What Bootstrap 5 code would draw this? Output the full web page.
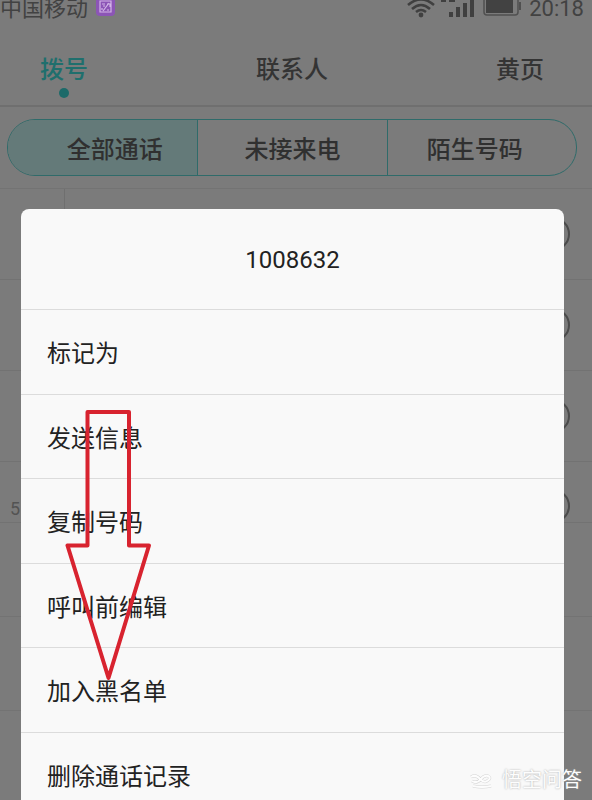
<!DOCTYPE html>
<html lang="zh-CN">
<head>
<meta charset="utf-8">
<meta name="viewport" content="width=device-width, initial-scale=1">
<title>通话记录</title>
<link href="https://cdn.jsdelivr.net/npm/bootstrap@5.3.0/dist/css/bootstrap.min.css" rel="stylesheet">
<style>
body { font-family: Roboto, "Noto Sans CJK SC", sans-serif; font-size: 24px; line-height: 32px; color: #343434; background: #7b7b7b; }
.phone { background: #7b7b7b; }
.status { height: 18px; font-size: 22px; line-height: 18px; color: #424242; padding: 0 8px 0 0; }
.tabs { height: 89px; padding: 0 48px 0 40px; border-bottom: 2px solid #6f6f6f; }
.tabs button { padding: 36px 0 0; color: #343434; font-size: 24px; line-height: 32px; font-weight: 500; }
.tabs button.current { color: #1f6f6d; }
.tabs .dot { width: 10px; height: 10px; background: #1c6a69; margin-top: 2px; }
.filters { padding: 12px 15px 12px 7px; border-bottom: 1px solid #737373; }
.segments { display: grid; grid-template-columns: repeat(3, 1fr); height: 57px; border: 1px solid #2f6b6a; border-radius: 28px; }
.segments button { color: #303030; font-weight: 500; padding: 5px 0 0; }
.segments button + button { border-left: 1px solid #2f6b6a !important; }
.segments button.current { background: #647a79; padding-left: 24px; }
.segments button:last-child { padding-right: 14px; }
.call { height: 91px; border-bottom: 1px solid #727272; padding-right: 21px; }
.call svg { display: block; }
.call.first .avatar-line { width: 65px; height: 91px; border-right: 1px solid #6f6f6f; }
.call.cut { height: 61px; }
.call.cut .num { font-size: 18px; line-height: 20px; padding: 37px 0 0 10px; color: #535353; }
.key { height: 94px; border-bottom: 1px solid #737373; }
.sheet { top: 209px; left: 21px; right: 28px; background: #f9f9f9; border-radius: 8px; color: #222; }
.sheet h1 { height: 100px; font-size: 24px; font-weight: 400; padding-top: 2px; }
.options { display: grid; grid-auto-rows: 1fr; height: 507px; }
.options button { border-top: 1px solid #dcdcdc; padding: 5px 0 0 26px; color: #222; font-weight: 400; }
.pointer { left: 64px; top: 407px; pointer-events: none; }
.brand { right: 10px; bottom: 8px; font-size: 20px; line-height: 24px; color: #fdfdfd; text-shadow: 0 0 2px #a0a0a0; }
</style>
<script src="https://cdn.jsdelivr.net/npm/bootstrap@5.3.0/dist/js/bootstrap.bundle.min.js"></script>
</head>
<body>
<div class="phone position-relative vh-100 overflow-hidden">
  <header>
    <div class="status d-flex justify-content-between align-items-start">
      <div class="d-flex align-items-start gap-2">
        <span class="carrier">中国移动</span>
        <svg width="20" height="18" viewBox="0 0 20 18" aria-hidden="true"><rect x="0" y="-4" width="19" height="20" rx="4" fill="#8c55b6"/><g fill="none" stroke="#d3b5e8" stroke-width="1.2"><path d="M4 1h11v11H4zM6 4h3M7 6h2M7 11l6-8M11 4h3v3M6 10V8M11 10h2"/></g></svg>
      </div>
      <div class="d-flex align-items-start">
        <svg width="118" height="18" viewBox="0 0 118 18" aria-label="信号与电量" role="img">
          <g fill="none" stroke="#404040" stroke-width="2.6"><path d="M5 5Q18-6 31 5M9 9Q18 1 27 9M13 12Q18 8 23 12"/></g>
          <circle cx="18" cy="15" r="2.4" fill="#404040"/>
          <g fill="#404040"><path d="M46 12h4v5h-4zM53 7h4v10h-4zM60 3h4v14h-4zM67-1h4v18h-4z"/><path d="M38 0h5v2h-5zM46 0h6v2h-6z"/></g>
          <path d="M81-3h31q3 0 3 3v12q0 3-3 3H84q-3 0-3-3z" fill="none" stroke="#505050" stroke-width="1.5"/>
          <path d="M83-1h27v14H83z" fill="#424242"/><path d="M117 2v8" stroke="#505050" stroke-width="2"/>
        </svg>
        <span class="clock ps-2">20:18</span>
      </div>
    </div>
    <nav class="tabs d-flex justify-content-between align-items-start">
      <button type="button" class="current btn border-0 rounded-0 d-flex flex-column align-items-center">拨号<span class="dot rounded-circle"></span></button>
      <button type="button" class="btn border-0 rounded-0">联系人</button>
      <button type="button" class="btn border-0 rounded-0">黄页</button>
    </nav>
    <div class="filters">
      <div class="segments overflow-hidden">
        <button type="button" class="current border-0">全部通话</button>
        <button type="button" class="bg-transparent border-0">未接来电</button>
        <button type="button" class="bg-transparent border-0">陌生号码</button>
      </div>
    </div>
  </header>
  <main>
    <div class="call first d-flex justify-content-between align-items-center"><span class="avatar-line"></span><svg width="36" height="36"><circle cx="18" cy="18" r="16" fill="none" stroke="#4b4b4b" stroke-width="2"/></svg></div>
    <div class="call d-flex justify-content-end align-items-center"><svg width="36" height="36"><circle cx="18" cy="18" r="16" fill="none" stroke="#4b4b4b" stroke-width="2"/></svg></div>
    <div class="call d-flex justify-content-end align-items-center"><svg width="36" height="36"><circle cx="18" cy="18" r="16" fill="none" stroke="#4b4b4b" stroke-width="2"/></svg></div>
    <div class="call cut d-flex justify-content-between align-items-end"><span class="num align-self-start">5</span><svg width="36" height="34"><circle cx="18" cy="18" r="16" fill="none" stroke="#4b4b4b" stroke-width="2"/></svg></div>
    <div class="key"></div>
    <div class="key"></div>
    <div class="key"></div>
  </main>

  <section class="sheet position-absolute" role="dialog" aria-labelledby="number">
    <h1 id="number" class="m-0 d-flex align-items-center justify-content-center">1008632</h1>
    <div class="options">
      <button type="button" class="bg-transparent border-start-0 border-end-0 border-bottom-0 text-start">标记为</button>
      <button type="button" class="bg-transparent border-start-0 border-end-0 border-bottom-0 text-start">发送信息</button>
      <button type="button" class="bg-transparent border-start-0 border-end-0 border-bottom-0 text-start">复制号码</button>
      <button type="button" class="bg-transparent border-start-0 border-end-0 border-bottom-0 text-start">呼叫前编辑</button>
      <button type="button" class="bg-transparent border-start-0 border-end-0 border-bottom-0 text-start">加入黑名单</button>
      <button type="button" class="bg-transparent border-start-0 border-end-0 border-bottom-0 text-start">删除通话记录</button>
    </div>
  </section>

  <svg class="pointer position-absolute" width="90" height="280" viewBox="0 0 90 280" aria-hidden="true"><path d="M23.500 5H65V138.500H85L44.500 271L3.500 138.500H23.500Z" fill="none" stroke="#d8232f" stroke-width="4" stroke-linejoin="round"/></svg>
  <div class="brand position-absolute d-flex align-items-center gap-2">
    <svg width="24" height="18" viewBox="0 0 24 18" fill="none" aria-hidden="true"><g stroke="#d4d4d4" stroke-width="3"><path d="M1 6q5-3 9 2 4 4 7 2 5-3 1-5-4-1-7 3-4 5-9 2M3 15q9 2 18 0"/></g><g stroke="#fdfdfd" stroke-width="2"><path d="M1 6q5-3 9 2 4 4 7 2 5-3 1-5-4-1-7 3-4 5-9 2M3 15q9 2 18 0"/></g></svg>
    <span>悟空问答</span>
  </div>
</div>
</body>
</html>
